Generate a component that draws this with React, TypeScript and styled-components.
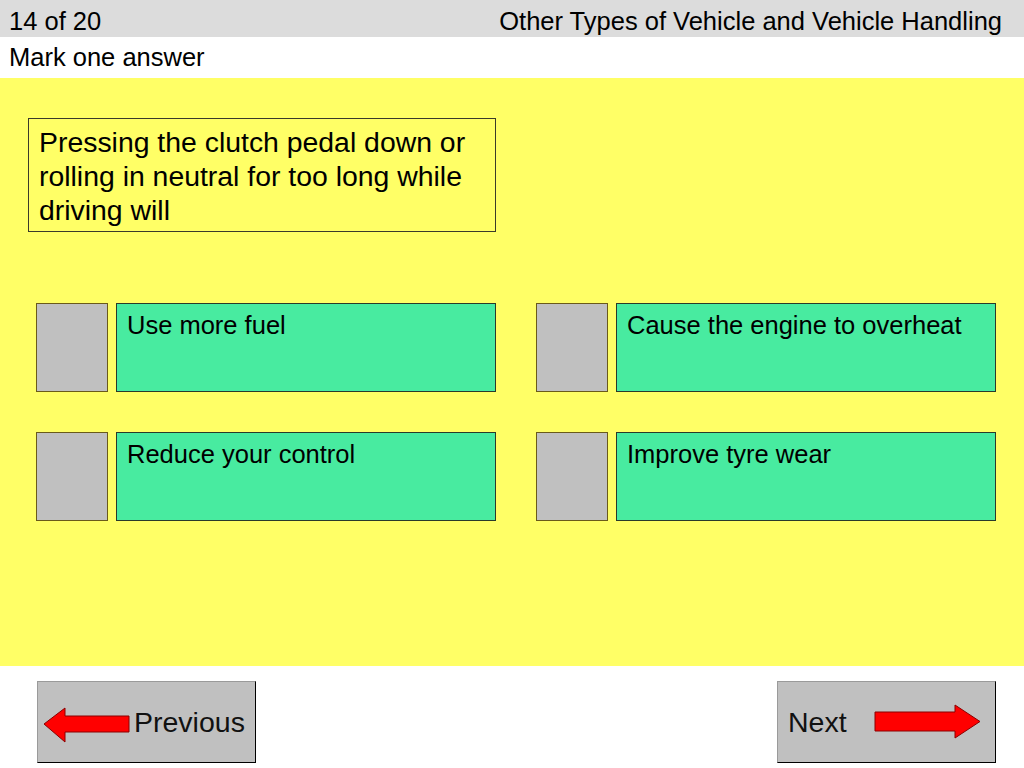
import React from "react";
import styled, { createGlobalStyle } from "styled-components";

const GlobalStyle = createGlobalStyle`
  html, body { margin: 0; padding: 0; background: #ffffff; }
  body { font-family: "Liberation Sans", Arial, sans-serif; color: #000; }
`;

const Page = styled.div`
  width: 1024px;
  height: 768px;
  display: flex;
  flex-direction: column;
  overflow: hidden;
`;

const TopBar = styled.div`
  height: 37px;
  box-sizing: border-box;
  background: #dcdcdc;
  display: flex;
  align-items: center;
  justify-content: space-between;
  padding: 5px 22px 0 9px;
  font-size: 25.5px;
  line-height: 29px;
`;

const Instruction = styled.div`
  height: 41px;
  display: flex;
  align-items: center;
  padding-left: 9px;
  font-size: 25.5px;
  line-height: 29px;
  background: #ffffff;
`;

const Stage = styled.div`
  height: 588px;
  background: #ffff66;
  padding: 40px 0 0 28px;
  box-sizing: border-box;
`;

const Question = styled.div`
  width: 468px;
  height: 114px;
  box-sizing: border-box;
  border: 1px solid #3a3a2a;
  padding: 6px 6px 0 10px;
  font-size: 28.4px;
  line-height: 34px;
`;

const Answers = styled.div`
  margin: 71px 0 0 8px;
  display: grid;
  grid-template-columns: 460px 460px;
  column-gap: 40px;
  row-gap: 40px;
`;

const AnswerRow = styled.div`
  display: flex;
  gap: 8px;
  height: 89px;
`;

const Tick = styled.div`
  width: 72px;
  height: 89px;
  box-sizing: border-box;
  background: #c0c0c0;
  border: 1px solid #6a5a1a;
`;

const Choice = styled.div`
  width: 380px;
  height: 89px;
  box-sizing: border-box;
  background: #48eba0;
  border: 1px solid #2a3a2a;
  padding: 7px 8px 0 10px;
  font-size: 25.5px;
  line-height: 29px;
`;

const Footer = styled.div`
  flex: 1;
  display: flex;
  justify-content: space-between;
  align-items: flex-start;
  padding: 15px 28px 0 37px;
  background: #ffffff;
`;

const NavButton = styled.div<{ $pad: number; $gap: number }>`
  width: 219px;
  height: 82px;
  box-sizing: border-box;
  background: #c0c0c0;
  border-top: 1px solid #9a9a9a;
  border-left: 1px solid #9a9a9a;
  border-right: 1px solid #000;
  border-bottom: 1px solid #000;
  display: flex;
  align-items: center;
  gap: ${(p) => p.$gap}px;
  padding-left: ${(p) => p.$pad}px;
  font-size: 28.5px;
  line-height: 32px;
  color: #111;
`;

const ArrowSvg = styled.svg<{ $dy: number }>`
  display: block;
  flex: none;
  margin-top: ${(p) => p.$dy}px;
`;

const LeftArrow = () => (
  <ArrowSvg $dy={5} width="88" height="36" viewBox="0 0 88 36">
    <polygon
      points="1,17 22,1 22,9 86,9 86,25 22,25 22,35"
      fill="#ff0000"
      stroke="#8a0000"
      strokeWidth="1"
      strokeLinejoin="round"
    />
  </ArrowSvg>
);

const RightArrow = () => (
  <ArrowSvg $dy={-1} width="108" height="36" viewBox="0 0 108 36">
    <polygon
      points="1,8 81,8 81,1 106,17.5 81,34 81,27 1,27"
      fill="#ff0000"
      stroke="#8a0000"
      strokeWidth="1"
      strokeLinejoin="round"
    />
  </ArrowSvg>
);

const answers = [
  "Use more fuel",
  "Cause the engine to overheat",
  "Reduce your control",
  "Improve tyre wear",
];

export default function App() {
  return (
    <>
      <GlobalStyle />
      <Page>
        <TopBar>
          <span>14 of 20</span>
          <span>Other Types of Vehicle and Vehicle Handling</span>
        </TopBar>
        <Instruction>Mark one answer</Instruction>
        <Stage>
          <Question>
            Pressing the clutch pedal down or rolling in neutral for too long
            while driving will
          </Question>
          <Answers>
            {answers.map((a) => (
              <AnswerRow key={a}>
                <Tick />
                <Choice>{a}</Choice>
              </AnswerRow>
            ))}
          </Answers>
        </Stage>
        <Footer>
          <NavButton $pad={5} $gap={3}>
            <LeftArrow />
            <span>Previous</span>
          </NavButton>
          <NavButton $pad={10} $gap={27}>
            <span>Next</span>
            <RightArrow />
          </NavButton>
        </Footer>
      </Page>
    </>
  );
}
